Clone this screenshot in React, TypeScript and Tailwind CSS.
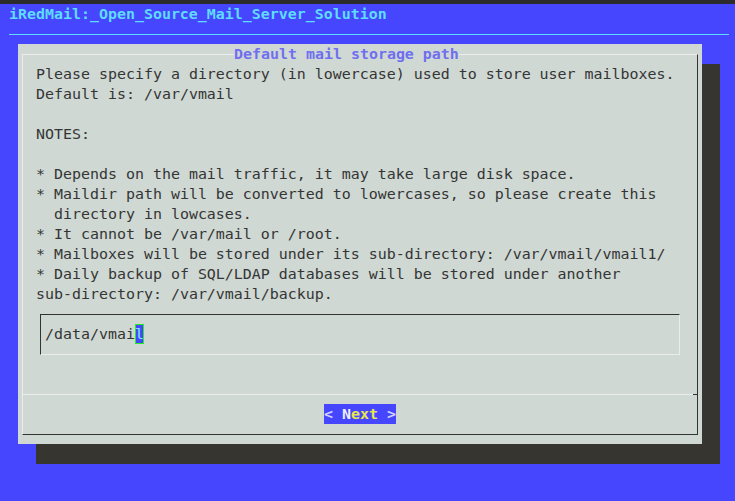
import React from 'react';

const LINES = [
  'Please specify a directory (in lowercase) used to store user mailboxes.',
  'Default is: /var/vmail',
  '',
  'NOTES:',
  '',
  '* Depends on the mail traffic, it may take large disk space.',
  '* Maildir path will be converted to lowercases, so please create this',
  '  directory in lowcases.',
  '* It cannot be /var/mail or /root.',
  '* Mailboxes will be stored under its sub-directory: /var/vmail/vmail1/',
  '* Daily backup of SQL/LDAP databases will be stored under another',
  'sub-directory: /var/vmail/backup.',
];

export default function App() {
  return (
    <div className="w-[735px] h-[501px] overflow-hidden bg-[#4646ff] font-['DejaVu_Sans_Mono',monospace] text-[14.95px] leading-[20px]">
      {/* terminal top edge */}
      <div className="h-[4px] bg-[#2c2c2c]" />

      {/* backtitle */}
      <div className="h-[20px] pl-[9px] font-bold text-[#5fdcff] whitespace-pre">
        iRedMail:_Open_Source_Mail_Server_Solution
      </div>
      <div className="h-[20px] flex items-center pl-[9px]">
        <div className="h-px w-[720px] bg-[#5fdcff]" />
      </div>

      {/* dialog */}
      <div className="ml-[18px] w-[684px] h-[400px] bg-[#cfd8d3] shadow-[18px_20px_0_0_#363530] px-[4px] pt-[10px] pb-[9px]">
        <div className="relative h-full border border-t-[#ececec] border-l-[#ececec] border-r-[#333333] border-b-[#333333] flex flex-col">
          <div className="absolute left-[211px] -top-[11px] h-[20px] bg-[#cfd8d3] font-bold text-[#6f6ff0] whitespace-pre">
            Default mail storage path
          </div>

          <div className="pl-[13px] pt-[9px] text-[#353535]">
            {LINES.map((line, i) => (
              <div key={i} className="h-[20px] whitespace-pre">
                {line}
              </div>
            ))}

            {/* input box */}
            <div className="mt-[10px] ml-[4px] w-[640px] h-[41px] border border-t-[#333333] border-l-[#333333] border-r-[#ececec] border-b-[#ececec] pl-[4px] pt-[9px]">
              <div className="flex h-[20px] whitespace-pre">
                <span>/data/vmai</span>
                <span className="w-[9px] h-[20px] bg-[#4646ff] text-[#7fe8ff] border border-[#22ee22] flex items-center justify-center leading-[18px]">
                  l
                </span>
              </div>
            </div>
          </div>

          {/* separator */}
          <div className="mt-[39px] flex h-px">
            <div className="flex-1 bg-[#ececec]" />
            <div className="w-[4px] bg-[#333333]" />
          </div>

          {/* buttons */}
          <div className="mt-[9px] flex justify-center">
            <div className="h-[20px] bg-[#4646ff] font-bold whitespace-pre">
              <span className="text-[#d4d4ff]">{'< '}</span>
              <span className="text-[#ececff]">N</span>
              <span className="text-[#e6e64a]">ext</span>
              <span className="text-[#d4d4ff]">{' >'}</span>
            </div>
          </div>
        </div>
      </div>
    </div>
  );
}
